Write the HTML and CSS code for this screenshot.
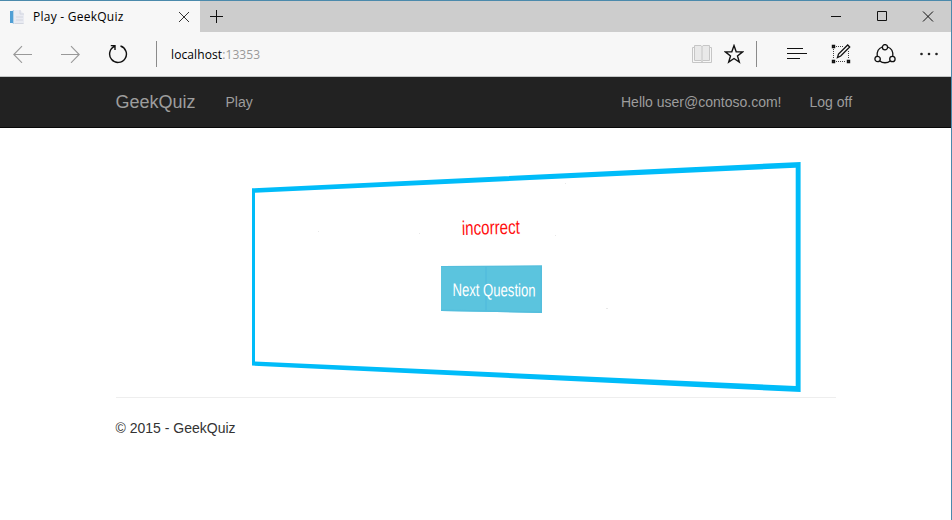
FILE: index.html
```html
<!DOCTYPE html>
<html lang="en">
<head>
<meta charset="utf-8">
<title>Play - GeekQuiz</title>
<link rel="stylesheet" href="styles.css">
</head>
<body>
<div class="window">
  <header class="tabs">
    <div class="tab">
      <svg class="favicon" width="16" height="16" viewBox="0 0 16 16"><path d="M3 1h8l4 4v10H3z" fill="#e9ebf2"/><path d="M1 2h3v12H1z" fill="#4f9fd5"/><path d="M4 1h1v14H4z" fill="#b6d3e8"/><path d="M11 1v4h4M7 8h7M7 11h7M5.500 14.500h9" fill="none" stroke="#d3d6df"/></svg>
      <span class="tab-title">Play - GeekQuiz</span>
      <svg class="tab-close" width="12" height="12" viewBox="0 0 12 12"><path d="M1 1l10 10M11 1L1 11"/></svg>
    </div>
    <svg class="new-tab" width="14" height="14" viewBox="0 0 14 14"><path d="M0 6.500h13M6.500 0v13"/></svg>
    <div class="window-controls">
      <svg width="12" height="12" viewBox="0 0 12 12"><path d="M1 5.500h10"/></svg>
      <svg width="12" height="12" viewBox="0 0 12 12"><path d="M1.500 .5h9v9h-9z"/></svg>
      <svg width="12" height="12" viewBox="0 0 12 12"><path d="M1 .5l10 10M11 .5l-10 10"/></svg>
    </div>
  </header>

  <div class="toolbar">
    <svg class="back" width="20" height="18" viewBox="0 0 20 18"><path d="M19 9.500H.8M9 1.200L.8 9.500 9 17.800"/></svg>
    <svg class="forward" width="20" height="18" viewBox="0 0 20 18"><path d="M0 9.500h18.200M10 1.200l8.200 8.300-8.200 8.300"/></svg>
    <svg class="reload" width="20" height="20" viewBox="0 0 20 20"><path d="M12.500 2A8.400 8.400 0 1 1 6.500 2.400M2.800 1.600H7V6"/></svg>
    <span class="divider"></span>
    <div class="address">localhost<span class="port">:13353</span></div>
    <svg class="reading" width="20" height="20" viewBox="0 0 20 20"><path class="pages" d="M2.500 1.500H9l1 1 1-1h6.500v15H11l-1 1-1-1H2.500z"/><path d="M10 2v16M2.500 3.500h-2v15h19v-15h-2"/></svg>
    <svg class="star" width="20" height="20" viewBox="0 0 20 20"><path d="M10 1.600l2.200 6.100 6.400.2-5.100 4 1.800 6.200-5.300-3.600-5.300 3.600 1.800-6.200-5.100-4 6.400-.2z"/></svg>
    <span class="divider divider-right"></span>
    <svg class="hub" width="20" height="14" viewBox="0 0 20 14"><path d="M0 1.500h16M0 6.500h20M0 11.500h13"/></svg>
    <svg class="note" width="20" height="20" viewBox="0 0 20 20"><path class="dots" d="M5 2.500h8M2.500 5v10M5 17.500h10M17.500 7v8"/><path class="handles" d="M1.500 1.500h2v2h-2zM1.500 16.500h2v2h-2zM16.500 16.500h2v2h-2z"/><path d="M6.500 13.500l1-3.500L16.700 1l2 2-9 9z"/></svg>
    <svg class="share" width="22" height="20" viewBox="0 0 22 20"><path d="M8.200 3C4.800 4.200 2.800 7.500 3.200 12M13.800 3c3.400 1.200 5.400 4.500 5 9M5.800 17c2.900 2.300 7.500 2.300 10.400 0"/><circle cx="11" cy="3.200" r="2.600"/><circle cx="3.600" cy="15" r="2.700"/><circle cx="18.400" cy="15" r="2.700"/></svg>
    <svg class="more" width="18" height="4" viewBox="0 0 18 4"><circle cx="1.500" cy="2" r="1.300"/><circle cx="9" cy="2" r="1.300"/><circle cx="16.500" cy="2" r="1.300"/></svg>
  </div>

  <nav class="navbar">
    <span class="brand">GeekQuiz</span>
    <span class="play">Play</span>
    <span class="user">Hello user@contoso.com!</span>
    <span class="logoff">Log off</span>
  </nav>

  <main class="container">
    <svg class="card" width="550" height="232" viewBox="251 161 550 232">
      <path class="frame" fill-rule="evenodd" d="M252 188.300L800.600 162v230L252 365.600zM255 192.800v168.600L795.700 386V167.700z"/>
      <path class="speck" d="M318 231h1v1h-1zM419 233h1v1h-1zM555 235h1v1h-1zM565 183h1v1h-1zM606 308h2v1h-2z"/>
      <text class="result" transform="translate(462 235) rotate(-1.300)" textLength="58" lengthAdjust="spacingAndGlyphs">incorrect</text>
      <path class="button" d="M441 266l101-.4V313l-101-2z"/>
      <path class="button-edge" d="M485 266h2v46h-2zM441 309.500l101 2v1.500l-101-2zM540.500 266h1.500v47h-1.500zM441 266l101-.4v1l-101 .4z"/>
      <text class="next" transform="translate(452.500 296) rotate(.3)" textLength="83" lengthAdjust="spacingAndGlyphs">Next Question</text>
    </svg>
    <footer>© 2015 - GeekQuiz</footer>
  </main>
</div>
</body>
</html>
```

FILE: styles.css
```css
* { box-sizing: border-box; }
body { margin: 0; background: #fff; font-family: "Liberation Sans", Arial, sans-serif; }
svg { display: block; flex: none; fill: none; stroke: #111; }

.window { width: 952px; height: 520px; border-top: 1px solid #4b8aac; border-right: 1px solid #4b8aac; overflow: hidden; }

.tabs { display: flex; align-items: center; height: 31px; background: #cdcdcd; }
.tab { display: flex; align-items: center; width: 200px; height: 31px; padding-left: 9px; background: #f7f7f7; }
.favicon { stroke: none; }
.tab-title { width: 145px; margin-left: 8px; font: 12px/16px "Open Sans", sans-serif; letter-spacing: 0.25px; color: #000; white-space: nowrap; }
.tab-close { stroke: #333; }
.new-tab { margin-left: 10px; }
.window-controls { display: flex; gap: 34px; margin-left: auto; margin-right: 17px; }

.toolbar { display: flex; align-items: center; height: 45px; padding-left: 13px; background: #f7f7f7; border-bottom: 1px solid #c4c7c7; }
.back, .forward { stroke: #999; stroke-width: 1.1; }
.forward { margin-left: 28px; }
.reload { margin-left: 27px; stroke-width: 1.4; }
.divider { width: 1px; height: 26px; margin-left: 28px; background: #8b8b8b; }
.address { width: 521px; margin-left: 14px; padding-top: 1px; font: 12px/16px "Open Sans", sans-serif; letter-spacing: 0.1px; color: #000; }
.port { color: #999; }
.reading { stroke: #c6c6c6; }
.pages { fill: #e9e9e9; }
.star { margin-left: 12px; stroke-width: 1.4; }
.divider-right { margin-left: 12px; }
.hub { margin-left: 30px; stroke-width: 1.2; }
.note { margin-left: 24px; stroke-width: 1.3; }
.dots { stroke: #444; stroke-width: 1; stroke-dasharray: 1 1; }
.handles { fill: #777; stroke-width: 1.4; }
.share { margin-left: 23px; stroke-width: 1.3; }
.more { margin-left: 24px; fill: #222; stroke: none; }

.navbar { display: flex; align-items: center; height: 51px; padding-left: 115.5px; background: #222; border-bottom: 1px solid #080808; color: #9d9d9d; font-size: 14px; white-space: nowrap; }
.brand { width: 110px; font-size: 18px; }
.play { width: 395.5px; }
.user { width: 188.5px; }

.container { margin: 33px 115px 0 115.5px; }
.card { margin-left: 135.5px; }
.frame { fill: #00bcf9; stroke: none; }
.speck { fill: #e8e8e8; stroke: none; }
.button { fill: #5bc4de; stroke: none; }
.button-edge { fill: #54bedd; stroke: none; }
.result { fill: #ff1010; stroke: none; font-size: 20px; }
.next { fill: #fff; stroke: none; font-size: 18px; }
footer { margin-top: 4px; padding-top: 20px; border-top: 1px solid #eee; font-size: 14px; line-height: 20px; color: #333; }
```
